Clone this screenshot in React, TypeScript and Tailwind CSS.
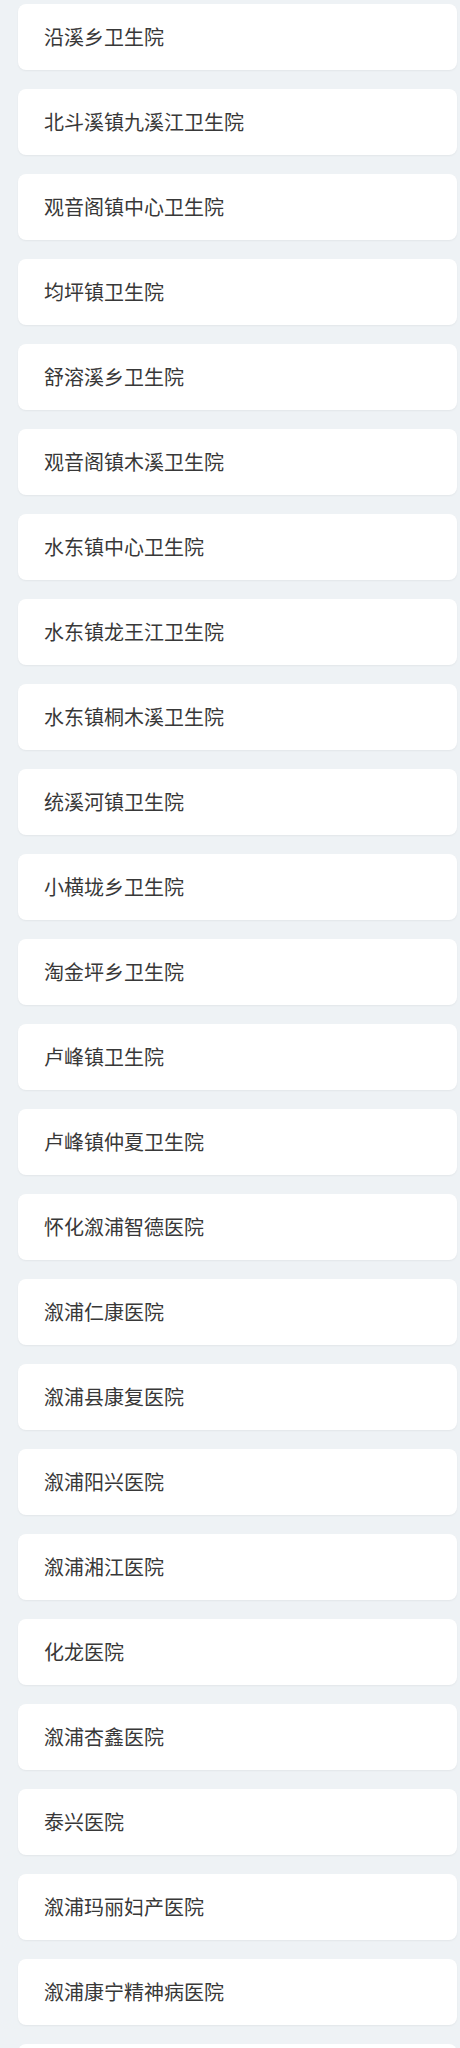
export default function App() {
  const hospitals = [
    "沿溪乡卫生院",
    "北斗溪镇九溪江卫生院",
    "观音阁镇中心卫生院",
    "均坪镇卫生院",
    "舒溶溪乡卫生院",
    "观音阁镇木溪卫生院",
    "水东镇中心卫生院",
    "水东镇龙王江卫生院",
    "水东镇桐木溪卫生院",
    "统溪河镇卫生院",
    "小横垅乡卫生院",
    "淘金坪乡卫生院",
    "卢峰镇卫生院",
    "卢峰镇仲夏卫生院",
    "怀化溆浦智德医院",
    "溆浦仁康医院",
    "溆浦县康复医院",
    "溆浦阳兴医院",
    "溆浦湘江医院",
    "化龙医院",
    "溆浦杏鑫医院",
    "泰兴医院",
    "溆浦玛丽妇产医院",
    "溆浦康宁精神病医院",
  ];
  return (
    <div
      className="min-h-[2048px] bg-[#eef2f5] pt-[4px] pb-8"
      style={{ fontFamily: '"Noto Sans CJK SC", "Noto Sans", sans-serif' }}
    >
      <div className="flex flex-col gap-[19px]">
        {hospitals.map((name, i) => (
          <div
            key={i}
            className="ml-[18px] mr-[3px] flex h-[66px] items-center rounded-[8px] bg-white px-[26px] shadow-[0_1px_2px_rgba(0,0,0,0.05)]"
          >
            <span className="text-[20px] leading-none text-[#383838]">{name}</span>
          </div>
        ))}
        {/* next card, below the fold */}
        <div className="ml-[18px] mr-[3px] h-[66px] rounded-[8px] bg-white shadow-[0_1px_2px_rgba(0,0,0,0.05)]" />
      </div>
    </div>
  );
}
